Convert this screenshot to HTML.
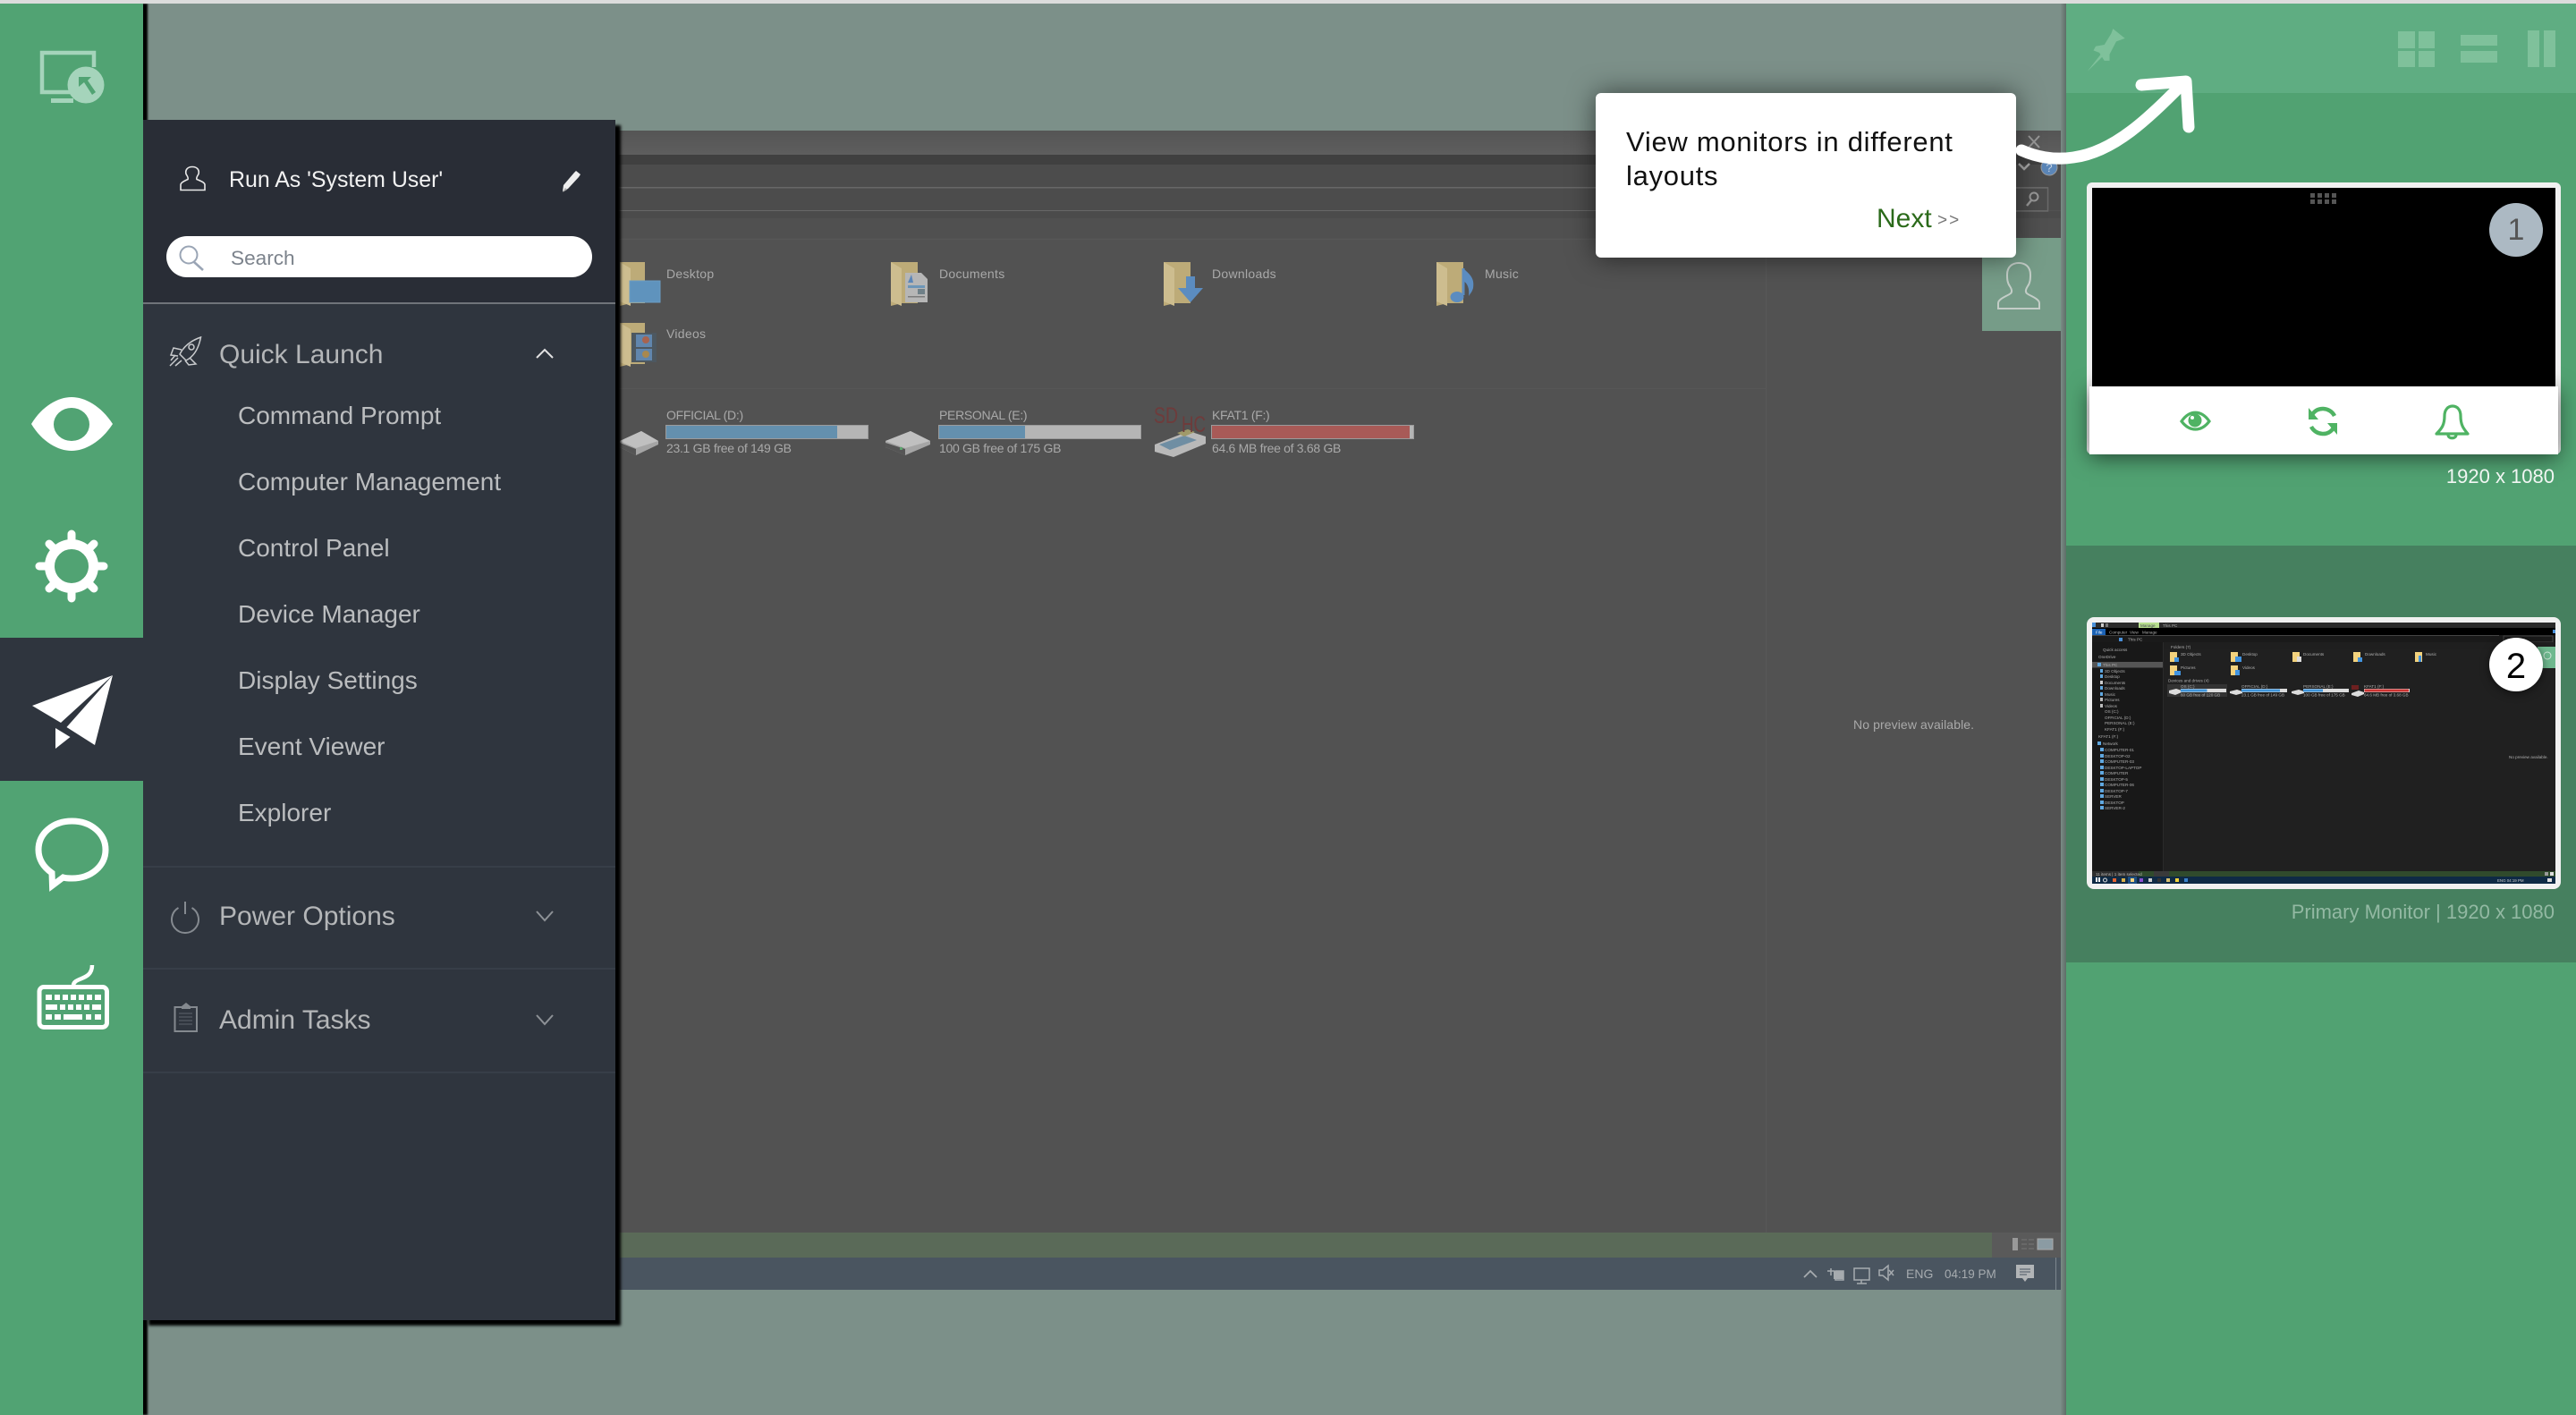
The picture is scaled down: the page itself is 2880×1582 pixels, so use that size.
<!DOCTYPE html>
<html lang="en"><head><meta charset="utf-8"><title>Remote Desktop</title>
<style>
html,body{margin:0;padding:0;background:#7c9089}
body{position:relative;width:2880px;height:1582px;overflow:hidden;font-family:"Liberation Sans",sans-serif}
.a{position:absolute}
.t{position:absolute;white-space:nowrap;line-height:40px;height:40px}
svg.ov{position:absolute;left:0;top:0;width:2880px;height:1582px;overflow:visible}
.m{font-size:28px;color:#bbbdbf;left:266px}
.h{font-size:30px;color:#b4b6b8;left:245px}
</style></head><body>

<div class="a" style="left:0;top:0;width:2880px;height:4px;background:#dcdcdc;z-index:9"></div>

<!-- dimmed remote explorer -->
<svg class="ov" viewBox="0 0 2880 1582" font-family="Liberation Sans, sans-serif">
<defs><linearGradient id="tb" x1="0" y1="0" x2="0" y2="1"><stop offset="0" stop-color="#555"/><stop offset="1" stop-color="#5e5e5e"/></linearGradient></defs>
<rect x="160" y="146" width="2144" height="1296" fill="#525252"/>
<rect x="160" y="146" width="2144" height="27" fill="url(#tb)"/>
<rect x="160" y="173" width="2144" height="11" fill="#404040"/>
<rect x="160" y="184" width="2144" height="25" fill="#4c4c4c"/>
<rect x="160" y="209" width="2144" height="26" fill="#4c4c4c"/>
<rect x="160" y="209" width="2130" height="1.5" fill="#676767"/>
<rect x="160" y="235" width="2130" height="1.5" fill="#676767"/>
<rect x="160" y="236" width="2144" height="8" fill="#4b4b4b"/>
<rect x="160" y="244" width="2144" height="22" fill="#505050"/>
<rect x="160" y="267" width="1814" height="1" fill="#575757"/>
<rect x="160" y="434" width="1814" height="1" fill="#575757"/>
<rect x="1974" y="266" width="1" height="1112" fill="#585858"/>
<!-- top-right window chrome -->
<path d="M2268 152l12 13M2280 152l-12 13" stroke="#999" stroke-width="2" fill="none"/>
<path d="M2257 183l6 6 6-6" stroke="#aaa" stroke-width="2.5" fill="none"/>
<circle cx="2291" cy="187" r="9" fill="#5b86b8" stroke="#999"/>
<text x="2291" y="192" font-size="13" fill="#c5d2e2" text-anchor="middle">?</text>
<rect x="2200" y="210" width="89.5" height="26" fill="none" stroke="#6a6a6a" stroke-width="1.5"/>
<circle cx="2274" cy="220" r="4.5" fill="none" stroke="#999" stroke-width="2"/><path d="M2271 224l-5 6" stroke="#999" stroke-width="2.5"/>
<!-- user tile -->
<rect x="2216" y="266" width="88" height="104" fill="#769c88"/>
<path d="M2234 345v-6c0-5 10-8 14-11 2-2 1-5-1-8-3-4-3-9-3-13 0-9 6-13 13-13s13 4 13 13c0 4 0 9-3 13-2 3-3 6-1 8 4 3 14 6 14 11v6z" fill="none" stroke="#c3cdc7" stroke-width="2"/>
<!-- folders -->
<g id="folders">
<path d="M693 293h28v46h-16l-12 3z" fill="#bdab78"/><path d="M693 293l12 7v42l-12-5z" fill="#cdbd8f"/>
<rect x="704" y="314" width="34" height="24" fill="#5f93bd" stroke="#6b9cc4"/>
<path d="M996 293h30v46h-18l-12 3z" fill="#bdab78"/><path d="M996 293l12 7v42l-12-5z" fill="#cdbd8f"/>
<path d="M1012 305h18l7 7v26h-25z" fill="#b6b6b6"/><rect x="1015" y="319" width="19" height="3" fill="#6d96b8"/><rect x="1026" y="323" width="8" height="6" fill="#6f8088"/><rect x="1015" y="331" width="19" height="1.5" fill="#7c7c7c"/><path d="M1015 316l4-9 2 9z" fill="#5b86b8"/>
<path d="M1301 293h30v46h-18l-12 3z" fill="#bdab78"/><path d="M1301 293l12 7v42l-12-5z" fill="#cdbd8f"/>
<path d="M1326 309h10v13h9l-14 16-14-16h9z" fill="#5b8cc0"/>
<path d="M1606 293h30v46h-18l-12 3z" fill="#bdab78"/><path d="M1606 293l12 7v42l-12-5z" fill="#cdbd8f"/>
<path d="M1636 300v30" stroke="#5b8cc0" stroke-width="3"/><path d="M1636 300c6 6 13 10 11 22-1 4-3 6-5 9 1-8-1-14-6-17z" fill="#5b8cc0"/><ellipse cx="1629" cy="332" rx="7.5" ry="6" fill="#5b8cc0"/>
<path d="M693 361h28v46h-16l-12 3z" fill="#bdab78"/><path d="M693 361l12 7v42l-12-5z" fill="#cdbd8f"/>
<rect x="706" y="372" width="28" height="33" fill="#4d5860"/><rect x="711" y="374" width="18" height="14" fill="#6186ad"/><rect x="711" y="390" width="18" height="13" fill="#6186ad"/><circle cx="722" cy="380" r="4" fill="#a8634f"/><circle cx="722" cy="396" r="4" fill="#a8884f"/>
</g>
<!-- drives -->
<g>
<path d="M693 493l24-11 19 11v4l-25 12-18-9z" fill="#a5a5a5"/><path d="M693 493l18 8 25-8-19-11z" fill="#c0c0c0"/><path d="M693 495l18 7v7l-18-9z" fill="#555"/>
<path d="M990 493l28-11 22 11v4l-28 12-22-9z" fill="#a5a5a5"/><path d="M990 493l22 8 28-8-22-11z" fill="#c0c0c0"/><path d="M990 495l22 7v7l-22-9z" fill="#555"/><rect x="1006" y="500" width="3" height="3" fill="#5ea36e"/>
<path d="M1291 497l38-15 19 6v8l-36 15-21-6z" fill="#b9b9b9"/><path d="M1296 497l28-10 14 5-30 11z" fill="#6f8ea3"/><path d="M1316 484l12-4 8 3-12 5z" fill="#a09a6a"/>
<text x="1290" y="473" font-size="25" fill="#6e3b3b" textLength="27" lengthAdjust="spacingAndGlyphs">SD</text>
<text x="1321" y="483" font-size="25" fill="#6e3b3b" textLength="27" lengthAdjust="spacingAndGlyphs">HC</text>
<rect x="744.5" y="475.5" width="226" height="15" fill="#b5b5b5" stroke="#9b9b9b"/><rect x="745" y="476" width="191" height="14" fill="#6490ae"/>
<rect x="1049.5" y="475.5" width="226" height="15" fill="#b5b5b5" stroke="#9b9b9b"/><rect x="1050" y="476" width="96" height="14" fill="#6490ae"/>
<rect x="1354.5" y="475.5" width="226" height="15" fill="#b5b5b5" stroke="#9b9b9b"/><rect x="1355" y="476" width="221" height="14" fill="#a85a57"/>
</g>
<g font-size="14" fill="#a9a9a9">
<g letter-spacing=".3"><text x="745" y="311">Desktop</text><text x="1050" y="311">Documents</text><text x="1355" y="311">Downloads</text><text x="1660" y="311">Music</text><text x="745" y="378">Videos</text></g>
<g letter-spacing="-.3"><text x="745" y="469">OFFICIAL (D:)</text><text x="1050" y="469">PERSONAL (E:)</text><text x="1355" y="469">KFAT1 (F:)</text>
<text x="745" y="506">23.1 GB free of 149 GB</text><text x="1050" y="506">100 GB free of 175 GB</text><text x="1355" y="506">64.6 MB free of 3.68 GB</text></g>
<text x="2072" y="815" letter-spacing=".1">No preview available.</text>
</g>
<!-- status bar + taskbar -->
<rect x="160" y="1378" width="2067" height="28" fill="#5a6a58"/>
<rect x="2227" y="1378" width="77" height="28" fill="#5a5a5a"/>
<rect x="2250" y="1384" width="6" height="14" fill="#999"/><path d="M2260 1386h6M2268 1386h6M2260 1391h6M2268 1391h6M2260 1396h6M2268 1396h6" stroke="#777"/>
<rect x="2278" y="1385" width="17" height="12" fill="#8b9ba3" stroke="#aaa"/>
<rect x="160" y="1406" width="2144" height="36" fill="#4a5560"/>
<path d="M2017 1428l7-7 7 7" fill="none" stroke="#a6abaf" stroke-width="1.8"/>
<path d="M2047 1418v8M2043 1421h8M2052 1421h9v10h-9z" fill="none" stroke="#a6abaf" stroke-width="1.5"/><rect x="2050" y="1421" width="11" height="9" fill="#a6abaf"/>
<path d="M2073 1418h17v13h-17zM2081 1431v4M2076 1435h11" fill="none" stroke="#a6abaf" stroke-width="1.5"/>
<path d="M2101 1420h4l6-5v16l-6-5h-4z" fill="none" stroke="#a6abaf" stroke-width="1.5"/><path d="M2112 1420l5 6M2117 1420l-5 6" stroke="#a6abaf" stroke-width="1.5"/>
<text x="2131" y="1429" font-size="14" fill="#a6abaf">ENG</text>
<text x="2174" y="1429" font-size="13.5" fill="#a6abaf">04:19 PM</text>
<path d="M2254 1414h20v15h-7l-3 4-3-4h-7z" fill="#b2b5b7"/><path d="M2258 1419h12M2258 1422h12M2258 1425h8" stroke="#4a5560"/>
<rect x="2298" y="1406" width="1" height="36" fill="#7d878f"/>
</svg>

<!-- panel side shadows -->
<div class="a" style="left:2304px;top:4px;width:6px;height:1578px;background:linear-gradient(90deg,#7b8c86,#5e6e68)"></div>

<!-- tooltip (below arrow) -->
<div class="a" style="left:1784px;top:104px;width:470px;height:184px;background:#fff;border-radius:6px;box-shadow:0 0 30px rgba(0,0,0,.55)">
<div class="t" style="left:34px;top:35px;font-size:31px;color:#111;letter-spacing:.72px">View monitors in different</div>
<div class="t" style="left:34px;top:73px;font-size:31px;color:#111;letter-spacing:.72px">layouts</div>
<div class="t" style="left:314px;top:121px;font-size:30px;color:#2b6a1a">Next</div>
<div class="t" style="left:382px;top:123px;font-size:19px;color:#777;letter-spacing:2px">&gt;&gt;</div>
</div>

<!-- left rail -->
<div class="a" style="left:0;top:4px;width:160px;height:1578px;background:#51a373;box-shadow:5px 0 2px #000"></div>
<div class="a" style="left:0;top:713px;width:160px;height:160px;background:#2f353e"></div>

<!-- menu -->
<div class="a" style="left:160px;top:134px;width:528px;height:1342px;background:#2f353e;box-shadow:6px 6px 3px #000"></div>
<div class="a" style="left:160px;top:134px;width:528px;height:205px;background:#292d36"></div>
<div class="a" style="left:160px;top:338px;width:528px;height:2px;background:#70747a"></div>
<div class="a" style="left:160px;top:968px;width:528px;height:2px;background:#373e48"></div>
<div class="a" style="left:160px;top:1082px;width:528px;height:2px;background:#373e48"></div>
<div class="a" style="left:160px;top:1198px;width:528px;height:2px;background:#373e48"></div>
<div class="t" style="left:256px;top:181px;font-size:24.9px;color:#f2f2f2">Run As 'System User'</div>
<div class="a" style="left:186px;top:264px;width:476px;height:46px;background:#fff;border-radius:23px"></div>
<div class="t" style="left:258px;top:269px;font-size:22.6px;color:#7c838c">Search</div>
<div class="t h" style="top:377px">Quick Launch</div>
<div class="t m" style="top:445px">Command Prompt</div>
<div class="t m" style="top:519px">Computer Management</div>
<div class="t m" style="top:593px">Control Panel</div>
<div class="t m" style="top:667px">Device Manager</div>
<div class="t m" style="top:741px">Display Settings</div>
<div class="t m" style="top:815px">Event Viewer</div>
<div class="t m" style="top:889px">Explorer</div>
<div class="t h" style="top:1005px">Power Options</div>
<div class="t h" style="top:1121px">Admin Tasks</div>

<!-- right panel -->
<div class="a" style="left:2310px;top:4px;width:570px;height:1578px;background:#51a272"></div>
<div class="a" style="left:2310px;top:4px;width:570px;height:100px;background:#5fad82"></div>
<div class="a" style="left:2310px;top:610px;width:570px;height:466px;background:#46805f"></div>

<!-- monitor 1 -->
<div class="a" style="left:2333px;top:204px;width:530px;height:304px;background:#f1f1f1;border-radius:6px"></div>
<div class="a" style="left:2339px;top:210px;width:518px;height:222px;background:#000"></div>
<div class="a" style="left:2336px;top:432px;width:524px;height:76px;background:#fff;box-shadow:0 4px 22px rgba(0,0,0,.55)"></div>
<div class="a" style="left:2783px;top:227px;width:60px;height:60px;border-radius:50%;background:#acb9c3;color:#555;font-size:34px;line-height:60px;text-align:center">1</div>
<div class="t" style="right:24px;top:513px;font-size:22px;color:#f1f6f3">1920 x 1080</div>

<!-- monitor 2 -->
<div class="a" style="left:2333px;top:690px;width:530px;height:304px;background:#f1f1f1;border-radius:8px"></div>
<div class="t" style="right:24px;top:1000px;font-size:22px;color:#93b9a3">Primary Monitor | 1920 x 1080</div>

<svg class="ov" viewBox="0 0 2880 1582" font-family="Liberation Sans, sans-serif">
<!-- thumbnail -->
<rect x="2339" y="696" width="518" height="292" fill="#202020"/>
<rect x="2339" y="696" width="518" height="6" fill="#2b2b2b"/>
<rect x="2391" y="696" width="23" height="6" fill="#b6dd8d"/>
<rect x="2339" y="702" width="518" height="8" fill="#000"/>
<rect x="2339" y="703" width="15" height="7" fill="#1b62b5"/>
<rect x="2339" y="710" width="518" height="8" fill="#1a1a1a"/>
<rect x="2339" y="710" width="455" height="1" fill="#444"/>
<rect x="2799" y="711" width="55" height="7" fill="none" stroke="#444"/>
<rect x="2339" y="718" width="518" height="8" fill="#1f1f1f"/>
<rect x="2339" y="718" width="79" height="256" fill="#181818"/>
<rect x="2418" y="718" width="1" height="256" fill="#2a2a2a"/>
<rect x="2339" y="740" width="79" height="6.5" fill="#555"/>
<rect x="2423" y="765" width="67" height="14" fill="#333"/>
<rect x="2339" y="696" width="4" height="5" fill="#4a90d9"/>
<rect x="2349" y="697" width="3" height="4" fill="#ccc"/><rect x="2354" y="697" width="3" height="4" fill="#777"/>
<rect x="2837" y="723" width="20" height="24" fill="#6fb98f"/>
<circle cx="2848" cy="733" r="4" fill="none" stroke="#cfe8d9"/>
<rect x="2369" y="713" width="4" height="4" fill="#4a90d9"/>
<rect x="2854" y="704" width="3" height="4" fill="#4a90d9"/>
<g font-size="4.6" fill="#aeaeae">
<text x="2393" y="701" fill="#445">Manage</text><text x="2418" y="701">This PC</text>
<text x="2343" y="708.5" fill="#fff">File</text><text x="2358" y="708.5">Computer</text><text x="2381" y="708.5">View</text><text x="2395" y="708.5">Manage</text>
<text x="2379" y="716.5">This PC</text>
<text x="2427" y="725">Folders (7)</text>
<text x="2351" y="728">Quick access</text><text x="2346" y="736">OneDrive</text><text x="2351" y="745">This PC</text>
<text x="2353" y="752">3D Objects</text><text x="2353" y="758">Desktop</text><text x="2353" y="765">Documents</text><text x="2353" y="771">Downloads</text><text x="2353" y="778">Music</text><text x="2353" y="784">Pictures</text><text x="2353" y="791">Videos</text><text x="2353" y="797">OS (C:)</text><text x="2353" y="804">OFFICIAL (D:)</text><text x="2353" y="810">PERSONAL (E:)</text><text x="2353" y="817">KFAT1 (F:)</text>
<text x="2346" y="825">KFAT1 (F:)</text><text x="2351" y="833">Network</text>
<text x="2353" y="840">COMPUTER-01</text><text x="2353" y="847">DESKTOP-02</text><text x="2353" y="853">COMPUTER-03</text><text x="2353" y="860">DESKTOP-LAPTOP</text><text x="2353" y="866">COMPUTER</text><text x="2353" y="873">DESKTOP-5</text><text x="2353" y="879">COMPUTER-06</text><text x="2353" y="886">DESKTOP-7</text><text x="2353" y="892">SERVER</text><text x="2353" y="899">DESKTOP</text><text x="2353" y="905">SERVER-2</text>
<text x="2424" y="762.5">Devices and drives (4)</text>
<text x="2438" y="769">OS (C:)</text><text x="2506" y="769">OFFICIAL (D:)</text><text x="2575" y="769">PERSONAL (E:)</text><text x="2643" y="769">KFAT1 (F:)</text>
<text x="2438" y="778.5">60 GB free of 120 GB</text><text x="2506" y="778.5">23.1 GB free of 149 GB</text><text x="2575" y="778.5">100 GB free of 175 GB</text><text x="2643" y="778.5">64.6 MB free of 3.68 GB</text>
<text x="2438" y="733">3D Objects</text><text x="2507" y="733">Desktop</text><text x="2575" y="733">Documents</text><text x="2644" y="733">Downloads</text><text x="2712" y="733">Music</text><text x="2438" y="748">Pictures</text><text x="2507" y="748">Videos</text>
<text x="2805" y="848">No preview available.</text>
</g>
<g fill="#f3d27d"><rect x="2426" y="729" width="8" height="11"/><rect x="2494" y="729" width="8" height="11"/><rect x="2563" y="729" width="8" height="11"/><rect x="2631" y="729" width="8" height="11"/><rect x="2700" y="729" width="8" height="11"/><rect x="2426" y="744" width="8" height="11"/><rect x="2494" y="744" width="8" height="11"/></g>
<g fill="#4294e0"><rect x="2431" y="735" width="5" height="5"/><rect x="2499" y="734" width="7" height="6"/><rect x="2568" y="734" width="5" height="6" fill="#ddd"/><rect x="2636" y="735" width="5" height="5"/><rect x="2704" y="733" width="3" height="7"/><rect x="2431" y="750" width="7" height="5"/><rect x="2499" y="749" width="5" height="6"/></g>
<g fill="#dcdcdc"><rect x="2438" y="770" width="51" height="4"/><rect x="2506" y="770" width="51" height="4"/><rect x="2575" y="770" width="51" height="4"/><rect x="2643" y="770" width="51" height="4"/>
<path d="M2425 772l8-2 6 2v2l-7 3-7-2zM2493 773l8-2 6 2v2l-7 2-7-2zM2562 773l8-2 6 2v2l-7 2-7-2zM2629 775l8-3 6 2v2l-7 3-7-2z"/></g>
<rect x="2438" y="770.5" width="29.5" height="3" fill="#3f94d8"/><rect x="2506" y="770.5" width="43" height="3" fill="#3f94d8"/><rect x="2575" y="770.5" width="22" height="3" fill="#3f94d8"/><rect x="2643.5" y="770.5" width="49.5" height="3" fill="#cc3432"/>
<rect x="2629" y="766" width="8" height="5" fill="#6d2020"/>
<g fill="#60a8e0"><rect x="2348" y="748" width="3" height="4"/><rect x="2348" y="754" width="3" height="4"/><rect x="2348" y="761" width="3" height="4" fill="#ccc"/><rect x="2348" y="767" width="3" height="4"/><rect x="2348" y="774" width="3" height="4"/><rect x="2348" y="780" width="3" height="4" fill="#bbb"/><rect x="2348" y="787" width="3" height="4" fill="#bbb"/><rect x="2348" y="836" width="4" height="4"/><rect x="2348" y="843" width="4" height="4"/><rect x="2348" y="849" width="4" height="4"/><rect x="2348" y="856" width="4" height="4"/><rect x="2348" y="862" width="4" height="4"/><rect x="2348" y="869" width="4" height="4"/><rect x="2348" y="875" width="4" height="4"/><rect x="2348" y="882" width="4" height="4"/><rect x="2348" y="888" width="4" height="4"/><rect x="2348" y="895" width="4" height="4"/><rect x="2348" y="901" width="4" height="4"/><rect x="2345" y="741" width="4" height="4"/><rect x="2345" y="829" width="4" height="4"/></g>
<rect x="2339" y="974" width="52" height="6" fill="#2e2e2e"/><rect x="2391" y="974" width="466" height="6" fill="#304a2c"/><rect x="2408" y="974" width="17" height="6" fill="#3a3a3a"/>
<text x="2343" y="979" font-size="4.6" fill="#bbb">11 items | 1 item selected</text>
<rect x="2845" y="975" width="4" height="4" fill="#999"/><rect x="2851" y="975" width="4" height="4" fill="#ddd"/>
<rect x="2339" y="980" width="518" height="8" fill="#0f2a45"/>
<rect x="2379" y="980" width="10" height="8" fill="#1d4e80"/>
<rect x="2343" y="981" width="2" height="5" fill="#fff"/><rect x="2346" y="981" width="2" height="5" fill="#fff"/>
<circle cx="2353.5" cy="984" r="2" fill="none" stroke="#ddd"/>
<rect x="2362" y="982" width="4" height="4" fill="#e2632f"/><rect x="2372" y="982" width="4" height="4" fill="#d8b04a"/><rect x="2382" y="982" width="4" height="4" fill="#f3d27d"/><rect x="2392" y="982" width="4" height="4" fill="#8a4fd0"/><rect x="2402" y="982" width="4" height="4" fill="#ccc"/><rect x="2412" y="982" width="4" height="4" fill="#333"/><rect x="2422" y="982" width="4" height="4" fill="#d9c070"/><rect x="2432" y="982" width="4" height="4" fill="#f2d33c"/><rect x="2442" y="982" width="4" height="4" fill="#3a80c9"/>
<text x="2792" y="986" font-size="4.4" fill="#ccc">ENG  04:19 PM</text>
<rect x="2848" y="982" width="5" height="4" fill="#ddd"/>
<circle cx="2813" cy="743" r="30" fill="#fff" filter="drop-shadow(0 2px 5px rgba(0,0,0,.5))"/>
<text x="2813" y="758" font-size="40" text-anchor="middle" fill="#000">2</text>

<!-- monitor 1 details -->
<g fill="#555"><rect x="2583" y="216" width="5" height="5"/><rect x="2591" y="216" width="5" height="5"/><rect x="2599" y="216" width="5" height="5"/><rect x="2607" y="216" width="5" height="5"/><rect x="2583" y="223" width="5" height="5"/><rect x="2591" y="223" width="5" height="5"/><rect x="2599" y="223" width="5" height="5"/><rect x="2607" y="223" width="5" height="5"/></g>
<g fill="none" stroke="#4fb363" stroke-width="3.2">
<path d="M2439 471c9-13 22-13 31 0-9 12-22 12-31 0z"/>
<path d="M2724 485c6-6 9-10 9-20 0-7 4-11 9-11s9 4 9 11c0 10 3 14 8 20z" stroke-linejoin="round"/><path d="M2737 486c0 5 9 5 9 0"/>
</g>
<circle cx="2454" cy="470" r="7.5" fill="#4fb363"/><circle cx="2451" cy="467" r="2" fill="#fff"/>
<g fill="none" stroke="#4fb363" stroke-width="4.500"><path d="M2610 465c-5-10-20-11-25-1"/><path d="M2584 477c5 10 20 11 25 1"/></g>
<path d="M2581 456v13h11zM2613 486v-13h-11z" fill="#4fb363"/>

<!-- header icons -->
<g fill="#7fc19b">
<path d="M2362.300 32.100L2375.700 42.900 2366 46.400 2358.500 60.700 2358.500 67.900 2352.700 67.900 2347 58.900 2340.500 56.400 2343 51.800 2352.700 50 2360.400 37.500z"/>
<path d="M2333.500 80l15-19 2.500 2z"/>
<rect x="2681" y="35" width="19" height="19"/><rect x="2704" y="35" width="18" height="19"/><rect x="2681" y="57" width="19" height="18"/><rect x="2704" y="57" width="18" height="18"/>
<rect x="2751" y="39" width="41" height="12"/><rect x="2751" y="57" width="41" height="13"/>
<rect x="2826" y="34" width="13" height="41"/><rect x="2844" y="34" width="13" height="41"/>
</g>

<!-- tutorial arrow -->
<g fill="none" stroke="#fff" stroke-width="13" stroke-linecap="round" stroke-linejoin="round">
<path d="M2260 168c18 8 38 11 58 8 46-6 84-44 124-84"/>
<path d="M2394 95l50-4 3 51"/>
</g>

<!-- rail icons -->
<g fill="none" stroke="#a5d4bb" stroke-width="4.5"><path d="M105 75V59H47v44h33"/></g>
<rect x="57" y="110" width="25" height="5" fill="#a5d4bb"/>
<circle cx="96" cy="95" r="20.5" fill="#a5d4bb"/>
<path d="M88 86h14l-4 4 9 13-4 3-9-14-6 5z" fill="#51a373"/>
<path d="M35 474c12-20 30-30 45-30s33 10 46 30c-13 20-31 30-46 30s-33-10-45-30z" fill="#fff"/>
<ellipse cx="80" cy="474.500" rx="20" ry="18.500" fill="#51a373"/>
<g stroke="#fff" stroke-width="9" stroke-linecap="round"><path d="M80 597v10M80 659v10M44 633h10M106 633h10M55 608l7 7M98 651l7 7M105 608l-7 7M62 651l-7 7"/></g>
<circle cx="80" cy="633" r="24.500" fill="none" stroke="#fff" stroke-width="11"/>
<path d="M126 755L36 789l32 19z" fill="#fff"/><path d="M126 755L74.500 813l31.500 20z" fill="#fff"/><path d="M62 814l16.500 10L62 837z" fill="#fff"/>
<path d="M58 976c-10-7-15-16-15-26 0-18 16-32 37.500-32S118 932 118 950s-16 32-37.500 32c-3 0-7 0-10-1l-12 9z" fill="none" stroke="#fff" stroke-width="7"/>
<rect x="44" y="1103.500" width="75.500" height="45" rx="5" fill="none" stroke="#fff" stroke-width="5"/>
<path d="M82 1102c0-10 21-5 21-23" fill="none" stroke="#fff" stroke-width="4.500"/>
<g fill="#fff"><rect x="51" y="1112" width="7" height="6"/><rect x="61" y="1112" width="6" height="6"/><rect x="70" y="1112" width="6" height="6"/><rect x="79" y="1112" width="6" height="6"/><rect x="88" y="1112" width="6" height="6"/><rect x="97" y="1112" width="6" height="6"/><rect x="106" y="1112" width="7" height="6"/>
<rect x="51" y="1123" width="13" height="6"/><rect x="67" y="1123" width="6" height="6"/><rect x="76" y="1123" width="6" height="6"/><rect x="85" y="1123" width="6" height="6"/><rect x="94" y="1123" width="6" height="6"/><rect x="103" y="1123" width="10" height="6"/>
<rect x="51" y="1134" width="7" height="6"/><rect x="61" y="1134" width="7" height="6"/><rect x="71" y="1134" width="21" height="6"/><rect x="96" y="1134" width="6" height="6"/><rect x="106" y="1134" width="7" height="6"/></g>

<!-- menu icons -->
<path d="M202 212.500v-6c0-3 6-5 8-6 1-2-1-4-2-6-1-4 1-8 7-8s8 4 7 8c-1 2-3 4-2 6 2 1 9 3 9 6v6z" fill="none" stroke="#e8e8e8" stroke-width="1.600"/>
<path d="M644 191l5 4-2 3-12 13-6 3 1-7 12-14z" fill="#eee"/><path d="M629 215l3-5 2 2z" fill="#aaa"/>
<circle cx="211" cy="285" r="9.500" fill="none" stroke="#9aa5b5" stroke-width="2"/><path d="M217 293l10 9" stroke="#9aa5b5" stroke-width="2.600"/>
<g fill="none" stroke="#c9cbcd" stroke-width="1.500"><path d="M224.500 377C213 381 205 388 201 396l7 7c8-4 14-13 16.500-26z"/><circle cx="214" cy="388" r="3"/><path d="M203 391l-9-2-3 8 8 1M212 400l7 7-8 1-4-5M199 400l-9 9M203 403l-7 6M196 397l-5 6"/></g>
<path d="M600 400l9-9 9 9" fill="none" stroke="#e2e2e2" stroke-width="2"/>
<path d="M199.500 1015a15 15 0 1 0 15 0" fill="none" stroke="#858a90" stroke-width="2"/><path d="M207 1008v14" stroke="#858a90" stroke-width="2"/>
<path d="M600 1019l9 10 9-10" fill="none" stroke="#8d9196" stroke-width="2"/>
<path d="M203 1126h-7.500v27h24.500v-27h-7" fill="none" stroke="#84898f" stroke-width="2"/><path d="M203 1128h10v-3l-5-4-5 4z" fill="#84898f"/><path d="M200 1133h15M200 1137h15M200 1141h15M200 1145h15" stroke="#4f555d" stroke-width="1.500"/>
<path d="M600 1135l9 10 9-10" fill="none" stroke="#8d9196" stroke-width="2"/>
</svg>
</body></html>
